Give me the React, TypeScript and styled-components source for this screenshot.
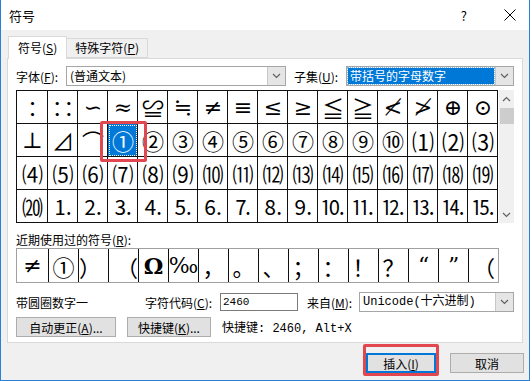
import styled, { createGlobalStyle } from "styled-components";

const UI = `"Noto Sans CJK SC", "Liberation Sans", sans-serif`;
const MONO = `"Liberation Mono", "Noto Sans CJK SC", monospace`;
const SYM = `"DejaVu Serif", "Liberation Serif", "Noto Sans CJK SC", serif`;

const GlobalStyle = createGlobalStyle`
  body {
    margin: 0;
    background: #ffffff;
    font-family: ${UI};
  }
`;

const Window = styled.div`
  width: 530px;
  height: 381px;
  box-sizing: border-box;
  border: 1px solid #2b7fd6;
  border-top: none;
  background: #f0f0f0;
  display: flex;
  flex-direction: column;
`;

const TitleBar = styled.div`
  height: 30px;
  background: #ffffff;
  display: flex;
  align-items: center;
  padding: 0 13px 0 8px;
  font-size: 13px;
  color: #000;
`;

const TitleText = styled.span`
  flex: 1;
`;

const HelpMark = styled.span`
  font-size: 13px;
  margin-right: 37px;
`;

const Body = styled.div`
  padding: 6px 6px 0 6px;
`;

const TabStrip = styled.div`
  display: flex;
  align-items: flex-end;
  height: 22px;
  padding-left: 1px;
`;

const Tab = styled.div<{ $active?: boolean }>`
  box-sizing: border-box;
  height: ${(p) => (p.$active ? "23px" : "20px")};
  margin-bottom: ${(p) => (p.$active ? "-1px" : "0")};
  padding: 0 ${(p) => (p.$active ? "9px" : "8px")};
  background: ${(p) => (p.$active ? "#ffffff" : "#f0f0f0")};
  border: 1px solid #d9d9d9;
  border-bottom: ${(p) => (p.$active ? "none" : "1px solid #d9d9d9")};
  border-left: ${(p) => (p.$active ? "1px solid #d9d9d9" : "none")};
  font-size: 12px;
  line-height: ${(p) => (p.$active ? "22px" : "18px")};
  position: relative;
  z-index: ${(p) => (p.$active ? 1 : 0)};
`;

const Panel = styled.div`
  box-sizing: border-box;
  height: 285px;
  background: #ffffff;
  border: 1px solid #d9d9d9;
  padding: 7px 7px 0 8px;
  font-size: 12px;
  color: #000;
`;

const FieldRow = styled.div<{ $gap?: number }>`
  display: flex;
  align-items: center;
  height: 20px;
  margin-top: ${(p) => p.$gap ?? 0}px;
`;

const Label = styled.span<{ $w?: number; $ml?: number }>`
  width: ${(p) => (p.$w ? `${p.$w}px` : "auto")};
  margin-left: ${(p) => p.$ml ?? 0}px;
  flex-shrink: 0;
  white-space: nowrap;
  font-size: 12px;
`;

const Combo = styled.div<{ $w: number }>`
  box-sizing: border-box;
  width: ${(p) => p.$w}px;
  height: 20px;
  border: 1px solid #a6a6a6;
  background: #ffffff;
  display: flex;
  align-items: stretch;
  flex-shrink: 0;
`;

const ComboText = styled.div<{ $selected?: boolean; $mono?: boolean }>`
  flex: 1;
  margin: 1px;
  padding-left: 2px;
  font-size: 12px;
  line-height: 16px;
  font-family: ${(p) => (p.$mono ? MONO : UI)};
  background: ${(p) => (p.$selected ? "#0078d7" : "transparent")};
  color: ${(p) => (p.$selected ? "#ffffff" : "#000")};
  outline: ${(p) => (p.$selected ? "1px dotted #7fb8ea" : "none")};
  white-space: nowrap;
  overflow: hidden;
`;

const DropButton = styled.div`
  width: 17px;
  background: #e5e5e5;
  border-left: 1px solid #c8c8c8;
  display: flex;
  align-items: center;
  justify-content: center;
`;

const SymbolArea = styled.div`
  display: flex;
  margin-top: 4px;
  height: 133px;
`;

const SymbolGrid = styled.div`
  display: grid;
  grid-template-columns: 31px repeat(15, 30px);
  grid-auto-rows: 33px;
  border-top: 1px solid #111;
  border-left: 1px solid #111;
`;

const Cell = styled.div<{ $selected?: boolean; $size?: number }>`
  box-sizing: border-box;
  border-right: 1px solid #111;
  border-bottom: 1px solid #111;
  display: flex;
  align-items: center;
  justify-content: center;
  font-family: ${SYM};
  font-size: ${(p) => p.$size ?? 22}px;
  color: ${(p) => (p.$selected ? "#ffffff" : "#000")};
  background: ${(p) => (p.$selected ? "#0078d7" : "transparent")};
  outline: ${(p) => (p.$selected ? "1px dotted #ffffff" : "none")};
  outline-offset: -2px;
  position: ${(p) => (p.$selected ? "relative" : "static")};
  z-index: ${(p) => (p.$selected ? 1 : "auto")};
  letter-spacing: -1px;
  white-space: nowrap;
  overflow: visible;
`;

const Marker = styled.div<{ $t: number; $r: number; $b: number; $l: number }>`
  position: absolute;
  top: ${(p) => p.$t}px;
  right: ${(p) => p.$r}px;
  bottom: ${(p) => p.$b}px;
  left: ${(p) => p.$l}px;
  border: 3px solid #e2464f;
  border-radius: 2px;
  pointer-events: none;
`;

const ScrollBar = styled.div`
  width: 15px;
  margin-left: 1px;
  background: #f0f0f0;
  display: flex;
  flex-direction: column;
  align-items: center;
`;

const ScrollArrow = styled.div`
  height: 17px;
  display: flex;
  align-items: center;
  justify-content: center;
`;

const ScrollThumb = styled.div`
  width: 14px;
  height: 16px;
  background: #cdcdcd;
  margin-top: 1px;
`;

const ScrollTrack = styled.div`
  flex: 1;
`;

const RecentLabel = styled.div`
  margin-top: 10px;
  height: 14px;
  line-height: 14px;
  font-size: 12px;
`;

const RecentGrid = styled.div`
  display: grid;
  grid-template-columns: 32px repeat(15, 30px);
  height: 35px;
  width: 483px;
  box-sizing: border-box;
  border: 1px solid #a0a0a0;
  margin-top: 1px;
`;

const RecentCell = styled.div<{ $bold?: boolean; $align?: string }>`
  border-right: 1px solid #111;
  display: flex;
  align-items: center;
  justify-content: ${(p) => p.$align ?? "center"};
  font-family: ${SYM};
  font-size: 22px;
  font-weight: ${(p) => (p.$bold ? 700 : 400)};
  &:last-child {
    border-right: none;
  }
`;

const CodeInput = styled.div`
  box-sizing: border-box;
  width: 78px;
  height: 18px;
  border: 1px solid #7a7a7a;
  font-family: ${MONO};
  font-size: 11px;
  line-height: 16px;
  padding-left: 2px;
  flex-shrink: 0;
`;

const Button = styled.div<{ $w: number; $default?: boolean }>`
  box-sizing: border-box;
  width: ${(p) => p.$w}px;
  height: 20px;
  background: #e1e1e1;
  border: ${(p) => (p.$default ? "2px solid #0078d7" : "1px solid #adadad")};
  display: flex;
  align-items: center;
  justify-content: center;
  font-size: 12px;
  flex-shrink: 0;
  position: relative;
`;

const PlainText = styled.span<{ $ml?: number }>`
  margin-left: ${(p) => p.$ml ?? 0}px;
  font-family: ${MONO};
  font-size: 12px;
  white-space: nowrap;
`;

const Footer = styled.div`
  display: flex;
  justify-content: flex-end;
  gap: 14px;
  padding: 10px 5px 0 0;
`;

const Chevron = ({ up }: { up?: boolean }) => (
  <svg width="9" height="6" viewBox="0 0 9 6">
    <path
      d={up ? "M1 5 L4.5 1.5 L8 5" : "M1 1 L4.5 4.5 L8 1"}
      fill="none"
      stroke="#606060"
      strokeWidth="1.2"
    />
  </svg>
);

const rows = [
  ["∶", "∷", "∽", "≈", "≌", "≒", "≠", "≡", "≤", "≥", "≦", "≧", "≮", "≯", "⊕", "⊙"],
  ["⊥", "⊿", "⌒", "①", "②", "③", "④", "⑤", "⑥", "⑦", "⑧", "⑨", "⑩", "⑴", "⑵", "⑶"],
  ["⑷", "⑸", "⑹", "⑺", "⑻", "⑼", "⑽", "⑾", "⑿", "⒀", "⒁", "⒂", "⒃", "⒄", "⒅", "⒆"],
  ["⒇", "⒈", "⒉", "⒊", "⒋", "⒌", "⒍", "⒎", "⒏", "⒐", "⒑", "⒒", "⒓", "⒔", "⒕", "⒖"],
];

const recent: { ch: string; bold?: boolean; align?: string }[] = [
  { ch: "≠" },
  { ch: "①" },
  { ch: "）", align: "flex-start" },
  { ch: "（", align: "flex-end" },
  { ch: "Ω", bold: true },
  { ch: "‰" },
  { ch: "，" },
  { ch: "。" },
  { ch: "、" },
  { ch: "；" },
  { ch: "：" },
  { ch: "！" },
  { ch: "？" },
  { ch: "“" },
  { ch: "”" },
  { ch: "（" },
];

export default function App() {
  return (
    <>
      <GlobalStyle />
      <Window>
        <TitleBar>
          <TitleText>符号</TitleText>
          <HelpMark>?</HelpMark>
          <svg width="12" height="12" viewBox="0 0 12 12">
            <path d="M0.5 0.5 L11.5 11.5 M11.5 0.5 L0.5 11.5" stroke="#000" strokeWidth="1" />
          </svg>
        </TitleBar>
        <Body>
          <TabStrip>
            <Tab $active>
              符号(<u>S</u>)
            </Tab>
            <Tab>
              特殊字符(<u>P</u>)
            </Tab>
          </TabStrip>
          <Panel>
            <FieldRow>
              <Label $w={50}>
                字体(<u>F</u>):
              </Label>
              <Combo $w={220}>
                <ComboText>(普通文本)</ComboText>
                <DropButton>
                  <Chevron />
                </DropButton>
              </Combo>
              <Label $w={52} $ml={8}>
                子集(<u>U</u>):
              </Label>
              <Combo $w={168}>
                <ComboText $selected>带括号的字母数字</ComboText>
                <DropButton>
                  <Chevron />
                </DropButton>
              </Combo>
            </FieldRow>

            <SymbolArea>
              <SymbolGrid>
                {rows.map((row, r) =>
                  row.map((ch, c) => {
                    const selected = r === 1 && c === 3;
                    return (
                      <Cell key={`${r}-${c}`} $selected={selected} $size={r >= 2 ? 21 : 22}>
                        {ch}
                        {selected && <Marker $t={-3} $r={-10} $b={-6} $l={-8} />}
                      </Cell>
                    );
                  })
                )}
              </SymbolGrid>
              <ScrollBar>
                <ScrollArrow>
                  <Chevron up />
                </ScrollArrow>
                <ScrollThumb />
                <ScrollTrack />
                <ScrollArrow>
                  <Chevron />
                </ScrollArrow>
              </ScrollBar>
            </SymbolArea>

            <RecentLabel>
              近期使用过的符号(<u>R</u>):
            </RecentLabel>
            <RecentGrid>
              {recent.map((item, i) => (
                <RecentCell key={i} $bold={item.bold} $align={item.align}>
                  {item.ch}
                </RecentCell>
              ))}
            </RecentGrid>

            <FieldRow $gap={9}>
              <Label $w={129}>带圆圈数字一</Label>
              <Label $w={75}>
                字符代码(<u>C</u>):
              </Label>
              <CodeInput>2460</CodeInput>
              <Label $w={52} $ml={9}>
                来自(<u>M</u>):
              </Label>
              <Combo $w={155}>
                <ComboText $mono>Unicode(十六进制)</ComboText>
                <DropButton>
                  <Chevron />
                </DropButton>
              </Combo>
            </FieldRow>

            <FieldRow $gap={5}>
              <Button $w={100}>
                自动更正(<u>A</u>)...
              </Button>
              <Button $w={84} style={{ marginLeft: 11 }}>
                快捷键(<u>K</u>)...
              </Button>
              <PlainText $ml={11}>快捷键: 2460, Alt+X</PlainText>
            </FieldRow>
          </Panel>
        </Body>
        <Footer>
          <Button $w={70} $default>
            插入(<u>I</u>)
            <Marker $t={-11} $r={-5} $b={-5} $l={-5} />
          </Button>
          <Button $w={74}>取消</Button>
        </Footer>
      </Window>
    </>
  );
}
